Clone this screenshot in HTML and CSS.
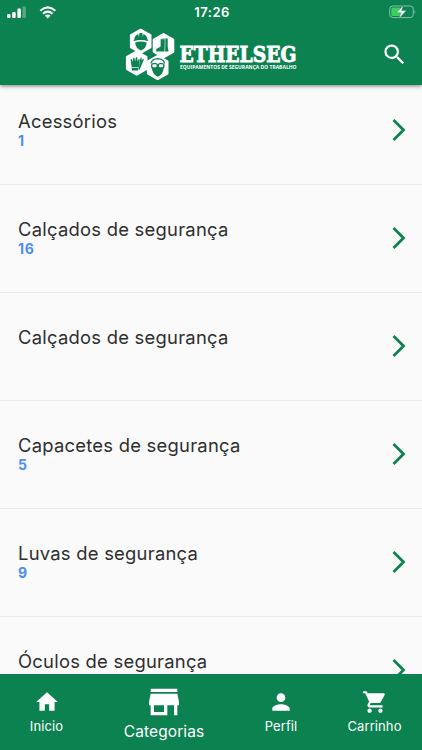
FILE: index.html
```html
<!DOCTYPE html>
<html lang="pt-BR">
<head>
  <meta charset="UTF-8">
  <meta name="viewport" content="width=device-width, initial-scale=1">
  <title>Ethelseg - Categorias</title>
  <link rel="stylesheet" href="styles.css">
</head>
<body>
  <svg width="0" height="0" class="symbols">
    <symbol id="chevron" viewBox="0 0 14 24">
      <path d="M1.5 2 L11.5 12 L1.5 22" fill="none" stroke="currentColor" stroke-width="2.8"/>
    </symbol>
    <symbol id="hex" viewBox="-12 -13 24 26">
      <path d="M0 -11.6 L9.7 -6 V6 L0 11.6 L-9.7 6 V-6 Z" fill="#fff" stroke="#fff" stroke-width="2.2" stroke-linejoin="round"/>
    </symbol>
  </svg>

  <header>
    <div class="status-bar">
      <svg class="signal" width="50" height="16" viewBox="0 0 50 16">
        <g fill="#fff">
          <rect x="0" y="9" width="3.5" height="4" rx="1"/>
          <rect x="5.2" y="7" width="3.5" height="6" rx="1"/>
          <rect x="10.4" y="3.5" width="3.5" height="9.5" rx="1"/>
          <rect x="15.4" y="1.5" width="3.5" height="11.5" rx="1" opacity="0.3"/>
          <path d="M38 10.6 Q40.8 8.6 43.6 10.6 L40.8 13.4 Z"/>
        </g>
        <path d="M33.3 5.8 Q40.8 -1 48.3 5.8 M36 8.7 Q40.8 4.4 45.6 8.7" fill="none" stroke="#fff" stroke-width="2.1"/>
      </svg>
      <span class="time">17:26</span>
      <svg class="battery" width="28" height="16" viewBox="0 0 28 16">
        <rect x="0.7" y="2" width="23.6" height="11.6" rx="3.2" fill="none" stroke="#fff" stroke-opacity="0.5"/>
        <path d="M25.6 5.7 Q27.4 7.7 25.6 9.8 Z" fill="#fff" opacity="0.5"/>
        <rect x="2.3" y="3.6" width="9.5" height="8.4" rx="1.5" fill="#3ad15c"/>
        <path d="M14.6 1 L7.2 8.8 H11.8 L9.8 14.7 L17.5 6.6 H12.8 Z" fill="#fff" stroke="#0d8251" stroke-width="0.5"/>
      </svg>
    </div>
    <div class="app-bar">
      <svg class="logo" width="178" height="56" viewBox="122 26 178 56">
        <use href="#hex" x="128.7" y="28.3" width="24" height="26"/>
        <use href="#hex" x="151.5" y="32.8" width="24" height="26"/>
        <use href="#hex" x="124.7" y="50" width="24" height="26"/>
        <use href="#hex" x="145.7" y="54.5" width="24" height="26"/>

        <!-- helmet -->
        <g fill="#0d8251">
          <path d="M134.2 39.8 Q134.5 35.5 138.2 34 L139 37 L139.4 33 H142.4 L142.8 37 L143.5 34 Q147.2 35.5 147.5 39.8 L148.5 41.2 Q141 38.8 133.2 41.2 Z"/>
          <path d="M135.2 42.4 Q141 40.6 146.6 42.4 Q146.3 48.6 141 50.4 Q135.6 48.6 135.2 42.4 Z"/>
        </g>
        <!-- boots -->
        <g fill="#0d8251">
          <path d="M162.5 38.6 L167.7 38.6 L167.7 46.5 L168.5 51.6 H161.5 Z"/>
          <path d="M160.3 38.8 L165 38.8 L165 47 L164.6 51.8 H155.8 L155.8 49 L160.3 46.4 Z" stroke="#fff" stroke-width="0.6"/>
        </g>
        <!-- gloves -->
        <g fill="#0d8251">
          <path d="M130.5 59.5 L131.8 59 L132.7 62 L133.2 57.8 H134.5 L135 61.5 L136 57.2 L137.3 57.6 L137.4 61.5 L138.7 59 L139.7 59.5 L139 66 L138 70.5 H132 L131.6 66 Z"/>
          <path d="M139.8 61 L140.6 57.5 L141.6 57.6 L141.4 60.4 L143 58.6 L143.8 59.4 L141.8 64.6 L139.8 69.5 H138.6 Z"/>
        </g>
        <path d="M131.8 67.5 H138.6" stroke="#fff" stroke-width="0.7"/>
        <!-- goggles -->
        <path d="M151.8 67 Q152 74.5 157.8 76.8 Q163.5 74.5 163.8 67 Z" fill="#0d8251"/>
        <g fill="none" stroke="#0d8251">
          <path d="M150.9 63.5 Q152 58.8 157.8 58.6 Q163.5 58.8 164.6 63.5" stroke-width="1.2"/>
          <rect x="151.7" y="63.6" width="5.6" height="4.4" rx="1.8" fill="#fff" stroke-width="1.4"/>
          <rect x="158.3" y="63.6" width="5.6" height="4.4" rx="1.8" fill="#fff" stroke-width="1.4"/>
        </g>

        <text class="logo-name" x="179.5" y="62" textLength="117" lengthAdjust="spacingAndGlyphs">ETHELSEG</text>
        <text class="logo-sub" x="180" y="68.9" textLength="116.5" lengthAdjust="spacingAndGlyphs">EQUIPAMENTOS DE SEGURANÇA DO TRABALHO</text>
      </svg>
      <svg class="search" width="27" height="27" viewBox="0 0 24 24">
        <path fill="#fff" d="M15.5 14h-.79l-.28-.27A6.47 6.47 0 0 0 16 9.5 6.5 6.5 0 1 0 9.5 16c1.61 0 3.09-.59 4.23-1.57l.27.28v.79l5 4.99L20.49 19l-4.99-5zm-6 0C7.01 14 5 11.99 5 9.5S7.01 5 9.5 5 14 7.01 14 9.5 11.99 14 9.5 14z"/>
      </svg>
    </div>
  </header>

  <main class="list">
    <div class="item">
      <div class="info"><div class="name">Acessórios</div><div class="count">1</div></div>
      <svg class="chevron"><use href="#chevron"/></svg>
    </div>
    <div class="item">
      <div class="info"><div class="name">Calçados de segurança</div><div class="count">16</div></div>
      <svg class="chevron"><use href="#chevron"/></svg>
    </div>
    <div class="item">
      <div class="info"><div class="name">Calçados de segurança</div><div class="count"></div></div>
      <svg class="chevron"><use href="#chevron"/></svg>
    </div>
    <div class="item">
      <div class="info"><div class="name">Capacetes de segurança</div><div class="count">5</div></div>
      <svg class="chevron"><use href="#chevron"/></svg>
    </div>
    <div class="item">
      <div class="info"><div class="name">Luvas de segurança</div><div class="count">9</div></div>
      <svg class="chevron"><use href="#chevron"/></svg>
    </div>
    <div class="item">
      <div class="info"><div class="name">Óculos de segurança</div><div class="count"></div></div>
      <svg class="chevron"><use href="#chevron"/></svg>
    </div>
  </main>

  <nav>
    <a class="tab">
      <svg viewBox="0 0 24 24"><path d="M10 20v-6h4v6h5v-8h3L12 3 2 12h3v8z"/></svg>
      <span>Inicio</span>
    </a>
    <a class="tab active">
      <svg viewBox="0 0 24 24"><path d="M20 4H4v2h16V4zm1 10v-2l-1-5H4l-1 5v2h1v6h10v-6h4v6h2v-6h1zm-9 4H6v-4h6v4z"/></svg>
      <span>Categorias</span>
    </a>
    <a class="tab">
      <svg viewBox="0 0 24 24"><path d="M12 12c2.21 0 4-1.79 4-4s-1.79-4-4-4-4 1.79-4 4 1.79 4 4 4zm0 2c-2.67 0-8 1.34-8 4v2h16v-2c0-2.66-5.33-4-8-4z"/></svg>
      <span>Perfil</span>
    </a>
    <a class="tab">
      <svg viewBox="0 0 24 24"><path d="M7 18c-1.1 0-1.99.9-1.99 2S5.9 22 7 22s2-.9 2-2-.9-2-2-2zM1 2v2h2l3.6 7.59-1.35 2.45c-.16.28-.25.61-.25.96 0 1.1.9 2 2 2h12v-2H7.42c-.14 0-.25-.11-.25-.25l.03-.12.9-1.63h7.45c.75 0 1.41-.41 1.75-1.03l3.58-6.49A1 1 0 0 0 20 4H5.21l-.94-2H1zm16 16c-1.1 0-1.99.9-1.99 2s.89 2 1.99 2 2-.9 2-2-.9-2-2-2z"/></svg>
      <span>Carrinho</span>
    </a>
  </nav>
</body>
</html>
```
FILE: styles.css
```css
* {
  box-sizing: border-box;
}
body {
  margin: 0;
  height: 750px;
  display: flex;
  flex-direction: column;
  overflow: hidden;
  background-color: #fafafa;
  font-family: Inter, sans-serif;
}
svg {
  display: block;
}
.symbols {
  position: absolute;
}
header {
  flex: none;
  height: 85px;
  background-color: #0d8251;
  color: white;
  box-shadow: 0 1px 4px rgba(0, 0, 0, 0.5);
  z-index: 1;
}
.status-bar {
  display: grid;
  grid-template-columns: 1fr auto 1fr;
  align-items: center;
  height: 24px;
  padding: 0 5px 0 7px;
}
.signal {
  margin-top: 2px;
}
.time {
  font-size: 13px;
  font-weight: 600;
  letter-spacing: 0.5px;
}
.battery {
  justify-self: end;
}
.app-bar {
  display: grid;
  grid-template-columns: 122px 178px 1fr;
  align-items: center;
  height: 60px;
  padding-right: 14px;
}
.logo {
  grid-column: 2;
}
.logo-name {
  font-family: "DejaVu Serif", serif;
  font-weight: bold;
  font-size: 21.5px;
  fill: white;
  stroke: white;
  stroke-width: 0.9px;
}
.logo-sub {
  font-family: "Open Sans", sans-serif;
  font-weight: bold;
  font-size: 5.6px;
  fill: white;
}
.search {
  justify-self: end;
}
.list {
  flex: 1;
  min-height: 0;
  overflow: hidden;
  margin-top: -8px;
}
.item {
  display: flex;
  justify-content: space-between;
  align-items: center;
  height: 108px;
  padding: 0 16px 1px 18px;
  border-bottom: 1px solid #e9e9e9;
}
.info {
  padding-bottom: 2px;
}
.name {
  font-size: 18.4px;
  line-height: 24px;
  letter-spacing: 0.25px;
  color: #2f2f2f;
}
.count {
  height: 16px;
  font-size: 14px;
  line-height: 16px;
  font-weight: bold;
  letter-spacing: 0.7px;
  color: #4d8df6;
}
.chevron {
  width: 14px;
  height: 24px;
  color: #0d8251;
}
nav {
  flex: none;
  display: grid;
  grid-template-columns: 93px 142px 92px 95px;
  height: 76px;
  background-color: #0d8251;
  color: white;
}
.tab {
  display: flex;
  flex-direction: column;
  align-items: center;
  padding-top: 15px;
  font-size: 13px;
  line-height: 16px;
  letter-spacing: 0.1px;
}
.tab svg {
  width: 26px;
  height: 26px;
  margin-bottom: 3px;
  fill: white;
}
.tab.active {
  padding-top: 8px;
  font-size: 15.5px;
  line-height: 20px;
}
.tab.active svg {
  width: 40px;
  height: 40px;
  margin-bottom: 0;
}
```
